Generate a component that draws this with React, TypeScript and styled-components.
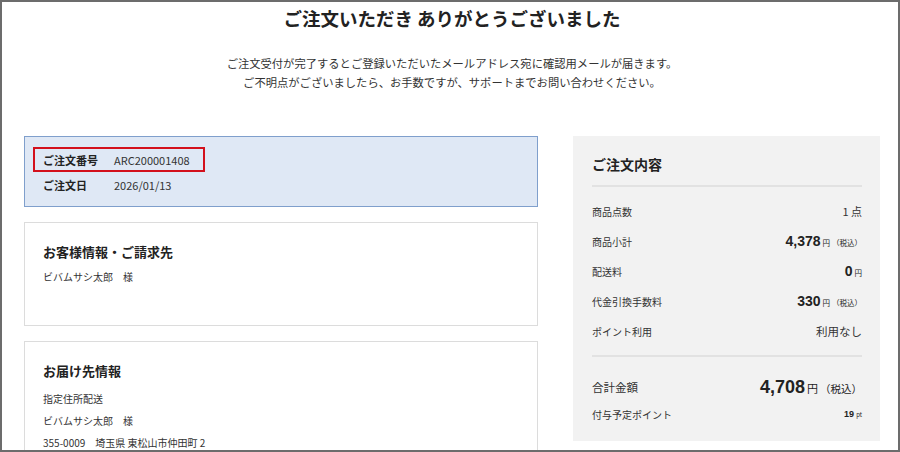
import React from 'react';
import styled, { createGlobalStyle } from 'styled-components';

const GlobalStyle = createGlobalStyle`
  html, body {
    margin: 0;
    padding: 0;
    background: #fff;
  }
  body {
    font-family: "Noto Sans CJK JP", "Noto Sans", sans-serif;
    color: #333;
  }
`;

const Frame = styled.div`
  box-sizing: border-box;
  width: 900px;
  height: 452px;
  border: 2px solid #6c6c6c;
  overflow: hidden;
  padding: 4px 18px 0 22px;
`;

const Title = styled.h1`
  margin: 0;
  font-size: 18.5px;
  line-height: 24px;
  font-weight: 700;
  color: #222;
  text-align: center;
`;

const Lead = styled.p`
  margin: 24px 0 0;
  font-size: 11.3px;
  line-height: 19px;
  text-align: center;
  color: #333;
`;

const Columns = styled.div`
  display: grid;
  grid-template-columns: 514px 307px;
  justify-content: space-between;
  align-items: start;
  margin-top: 44px;
`;

const LeftCol = styled.div`
  display: flex;
  flex-direction: column;
  gap: 15px;
`;

const OrderBox = styled.div`
  background: #dfe8f5;
  border: 1px solid #7f9fcc;
  padding: 10px 8px 9px;
`;

const OrderRow = styled.div<{ $marked?: boolean }>`
  display: flex;
  align-items: center;
  width: fit-content;
  height: 25px;
  box-sizing: border-box;
  padding: 0 13px 0 8px;
  border: 2px solid ${(p) => (p.$marked ? '#d3101c' : 'transparent')};
`;

const OrderLabel = styled.span`
  width: 71px;
  font-size: 11px;
  font-weight: 700;
  color: #222;
`;

const OrderValue = styled.span`
  font-size: 11px;
  color: #333;
`;

const Card = styled.div<{ $bottom: number }>`
  background: #fff;
  border: 1px solid #dcdcdc;
  padding: 19px 18px ${(p) => p.$bottom}px;
`;

const CardHeading = styled.h2`
  margin: 0;
  font-size: 13px;
  line-height: 20px;
  font-weight: 700;
  color: #222;
`;

const CardLine = styled.div<{ $gap?: number }>`
  font-size: 10px;
  line-height: 22px;
  color: #333;
  margin-top: ${(p) => p.$gap ?? 0}px;
  white-space: pre;
`;

const Summary = styled.div`
  background: #f2f2f2;
  padding: 18px 18px 14px 19px;
`;

const SummaryHeading = styled.h2`
  margin: 0;
  font-size: 14px;
  line-height: 20px;
  font-weight: 700;
  color: #222;
`;

const Divider = styled.hr<{ $top: number }>`
  margin: ${(p) => p.$top}px 0 0;
  border: none;
  border-top: 2px solid #e2e2e2;
`;

const Rows = styled.div<{ $top: number }>`
  margin-top: ${(p) => p.$top}px;
`;

const Row = styled.div<{ $h?: number }>`
  display: flex;
  justify-content: space-between;
  align-items: center;
  height: ${(p) => p.$h ?? 30}px;
`;

const RowLabel = styled.span<{ $size?: number }>`
  font-size: ${(p) => p.$size ?? 10}px;
  color: #333;
`;

const Value = styled.span`
  display: flex;
  align-items: baseline;
  color: #222;
`;

const Num = styled.span<{ $size: number }>`
  font-family: "Liberation Sans", Arial, sans-serif;
  font-weight: 700;
  font-size: ${(p) => p.$size}px;
`;

const Unit = styled.span<{ $size: number }>`
  font-size: ${(p) => p.$size}px;
  margin-left: 2px;
`;

const Plain = styled.span<{ $size: number }>`
  font-size: ${(p) => p.$size}px;
  color: #333;
`;

const App: React.FC = () => {
  return (
    <>
      <GlobalStyle />
      <Frame>
        <Title>ご注文いただき ありがとうございました</Title>
        <Lead>
          ご注文受付が完了するとご登録いただいたメールアドレス宛に確認用メールが届きます。
          <br />
          ご不明点がございましたら、お手数ですが、サポートまでお問い合わせください。
        </Lead>

        <Columns>
          <LeftCol>
            <OrderBox>
              <OrderRow $marked>
                <OrderLabel>ご注文番号</OrderLabel>
                <OrderValue>ARC200001408</OrderValue>
              </OrderRow>
              <OrderRow>
                <OrderLabel>ご注文日</OrderLabel>
                <OrderValue>2026/01/13</OrderValue>
              </OrderRow>
            </OrderBox>

            <Card $bottom={37}>
              <CardHeading>お客様情報・ご請求先</CardHeading>
              <CardLine $gap={4}>ビバムサシ太郎　様</CardLine>
            </Card>

            <Card $bottom={20}>
              <CardHeading>お届け先情報</CardHeading>
              <CardLine $gap={7}>指定住所配送</CardLine>
              <CardLine>ビバムサシ太郎　様</CardLine>
              <CardLine>355-0009　埼玉県 東松山市仲田町 2</CardLine>
            </Card>
          </LeftCol>

          <Summary>
            <SummaryHeading>ご注文内容</SummaryHeading>
            <Divider $top={11} />
            <Rows $top={9}>
              <Row>
                <RowLabel>商品点数</RowLabel>
                <Plain $size={11}>1 点</Plain>
              </Row>
              <Row>
                <RowLabel>商品小計</RowLabel>
                <Value>
                  <Num $size={14}>4,378</Num>
                  <Unit $size={7.5}>円</Unit>
                  <Unit $size={7.5}>（税込）</Unit>
                </Value>
              </Row>
              <Row>
                <RowLabel>配送料</RowLabel>
                <Value>
                  <Num $size={14}>0</Num>
                  <Unit $size={7.5}>円</Unit>
                </Value>
              </Row>
              <Row>
                <RowLabel>代金引換手数料</RowLabel>
                <Value>
                  <Num $size={14}>330</Num>
                  <Unit $size={7.5}>円</Unit>
                  <Unit $size={7.5}>（税込）</Unit>
                </Value>
              </Row>
              <Row>
                <RowLabel>ポイント利用</RowLabel>
                <Plain $size={11.5}>利用なし</Plain>
              </Row>
            </Rows>
            <Divider $top={9} />
            <Rows $top={16}>
              <Row $h={28}>
                <RowLabel $size={11.5}>合計金額</RowLabel>
                <Value>
                  <Num $size={18}>4,708</Num>
                  <Unit $size={11}>円</Unit>
                  <Unit $size={10.5}>（税込）</Unit>
                </Value>
              </Row>
              <Row $h={26}>
                <RowLabel>付与予定ポイント</RowLabel>
                <Value>
                  <Num $size={9}>19</Num>
                  <Unit $size={6}>pt</Unit>
                </Value>
              </Row>
            </Rows>
          </Summary>
        </Columns>
      </Frame>
    </>
  );
};

export default App;
